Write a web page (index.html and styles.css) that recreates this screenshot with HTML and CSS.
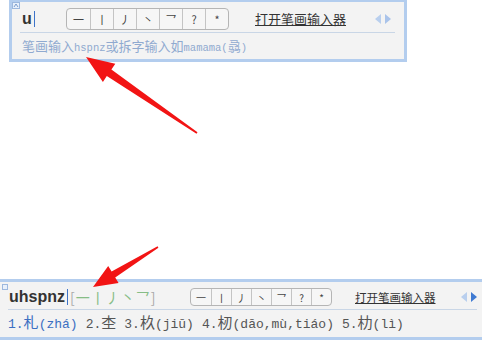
FILE: index.html
```html
<!DOCTYPE html>
<html lang="zh">
<head>
    <meta charset="UTF-8">
    <title>笔画输入</title>
    <link rel="stylesheet" href="styles.css">
</head>
<body>

    <!-- 上面的输入框：只输入了 u -->
    <div class="ime ime-top">
        <svg class="corner" width="8" height="7" viewBox="0 0 8 7"><rect x="0.5" y="0.5" width="7" height="6" fill="#e8f0fb" stroke="#9db8de"/><path d="M2 5 L4 2 L6 5" fill="none" stroke="#7a9ccc"/></svg>
        <div class="row">
            <div class="code">u<i class="caret"></i></div>
            <div class="strokes">
                <span>一</span><span>丨</span><span>丿</span><span>丶</span><span>乛</span><span>?</span><span>*</span>
            </div>
            <a class="open">打开笔画输入器</a>
            <div class="pager"><b class="prev"></b><b class="next"></b></div>
        </div>
        <div class="sep"></div>
        <div class="hint">笔画输入<span class="lat">hspnz</span>或拆字输入如<span class="lat">mamama(</span>骉<span class="lat">)</span></div>
    </div>

    <!-- 下面的输入框：输入 uhspnz 之后 -->
    <div class="ime ime-bottom">
        <svg class="corner" width="6" height="6" viewBox="0 0 6 6"><rect x="0.5" y="0.5" width="5" height="5" fill="#e8f0fb" stroke="#9db8de"/></svg>
        <div class="row">
            <div class="code">uhspnz<i class="caret"></i></div>
            <div class="typed">[<em>一丨丿丶乛</em>]</div>
            <div class="strokes">
                <span>一</span><span>丨</span><span>丿</span><span>丶</span><span>乛</span><span>?</span><span>*</span>
            </div>
            <a class="open">打开笔画输入器</a>
            <div class="pager"><b class="prev"></b><b class="next on"></b></div>
        </div>
        <div class="sep"></div>
        <div class="cands">
            <span class="cand first">1.<span class="hz">札</span>(zhá)</span>
            <span class="cand">2.<span class="hz">杢</span></span>
            <span class="cand">3.<span class="hz">杦</span>(jiū)</span>
            <span class="cand">4.<span class="hz">杒</span>(dāo,mù,tiáo)</span>
            <span class="cand">5.<span class="hz">朸</span>(lì)</span>
        </div>
    </div>

    <!-- 红色箭头 -->
    <svg class="arrows" width="482" height="352" viewBox="0 0 482 352">
        <polygon fill="#f21414" points="86,57 115.3,63.7 111.4,69.5 197.5,132.3 196.5,133.7 106.8,76.1 102.9,81.9"/>
        <polygon fill="#f21414" points="93,287 118.6,282.9 115.2,277.4 158.4,247.7 157.6,246.3 111.6,271.4 108.2,265.9"/>
    </svg>

</body>
</html>
```

FILE: styles.css
```css
body {
    margin: 0;
    background: #fff;
    position: relative;
    width: 482px;
    height: 352px;
    overflow: hidden;
    font-family: "Noto Sans CJK SC", sans-serif;
    color: #333;
}
.ime {
    position: relative;
    background: #f3f3f3;
    border: 3px solid #b3cdee;
    box-sizing: border-box;
}
.ime-top {
    margin: -1px 0 0 9px;
    width: 398px;
    height: 63px;
    padding: 6px 0 0 10px;
}
.ime-bottom {
    margin-top: 217px;
    width: 490px;
    height: 61px;
    border-left: none;
    padding: 4px 0 0 9px;
}
.corner {
    position: absolute;
    left: 0;
    top: 0;
}
.ime-bottom .corner {
    left: 2px;
    top: 2px;
}
.row {
    display: flex;
    align-items: center;
    height: 22px;
}
.code {
    font-family: "Liberation Sans", Arial, sans-serif;
    font-weight: bold;
    font-size: 16px;
    color: #333;
    display: flex;
    align-items: center;
    height: 22px;
}
.ime-top .code {
    width: 44px;
}
.caret {
    display: inline-block;
    width: 1px;
    height: 16px;
    background: #3d74c9;
    margin-left: 2px;
}
.typed {
    margin-left: 2px;
    width: 120px;
    font-size: 14px;
    color: #a9a9a9;
    letter-spacing: 1px;
}
.typed em {
    font-style: normal;
    color: #86bd86;
    letter-spacing: 1px;
}
.strokes {
    display: flex;
    border: 1px solid #b5b5b5;
    border-radius: 4px;
    background: #f6f6f6;
    height: 22px;
    box-sizing: border-box;
}
.strokes span {
    width: 23px;
    display: flex;
    align-items: center;
    justify-content: center;
    border-left: 1px solid #c4c4c4;
    font-size: 11px;
    color: #444;
    box-sizing: border-box;
}
.strokes span:first-child {
    border-left: none;
}
.ime-bottom .strokes {
    height: 18px;
}
.ime-bottom .strokes span {
    width: 20px;
    font-size: 10px;
}
.open {
    font-size: 13px;
    color: #333;
    text-decoration: underline;
    margin-left: 26px;
    line-height: 16px;
}
.ime-bottom .open {
    font-size: 11.5px;
    margin-left: 23px;
}
.pager {
    display: flex;
    gap: 4px;
    margin-left: 29px;
}
.ime-bottom .pager {
    margin-left: 25px;
}
.pager b {
    width: 0;
    height: 0;
    border-top: 5px solid transparent;
    border-bottom: 5px solid transparent;
}
.pager .prev {
    border-right: 6px solid #b9cfee;
}
.pager .next {
    border-left: 6px solid #a9c3ea;
}
.pager .next.on {
    border-left-color: #3f7ad2;
}
.sep {
    height: 1px;
    background: #c9d6e6;
    margin: 2px 0 0 -2px;
    width: 375px;
}
.ime-bottom .sep {
    margin: 1px 0 0 -1px;
    width: 469px;
}
.hint {
    margin-top: 5px;
    font-size: 13px;
    line-height: 16px;
    color: #90aad0;
    white-space: nowrap;
}
.lat {
    font-family: "Liberation Mono", monospace;
    font-size: 10.5px;
}
.cands {
    margin-top: 3px;
    display: flex;
    gap: 8px;
    font-family: "Liberation Mono", monospace;
    font-size: 13px;
    line-height: 18px;
    color: #555;
    white-space: nowrap;
    margin-left: -1px;
}
.cand.first {
    color: #3b6fc2;
}
.hz {
    font-family: "Noto Sans CJK SC", sans-serif;
    font-size: 15px;
}
.arrows {
    position: absolute;
    left: 0;
    top: 0;
}
```
